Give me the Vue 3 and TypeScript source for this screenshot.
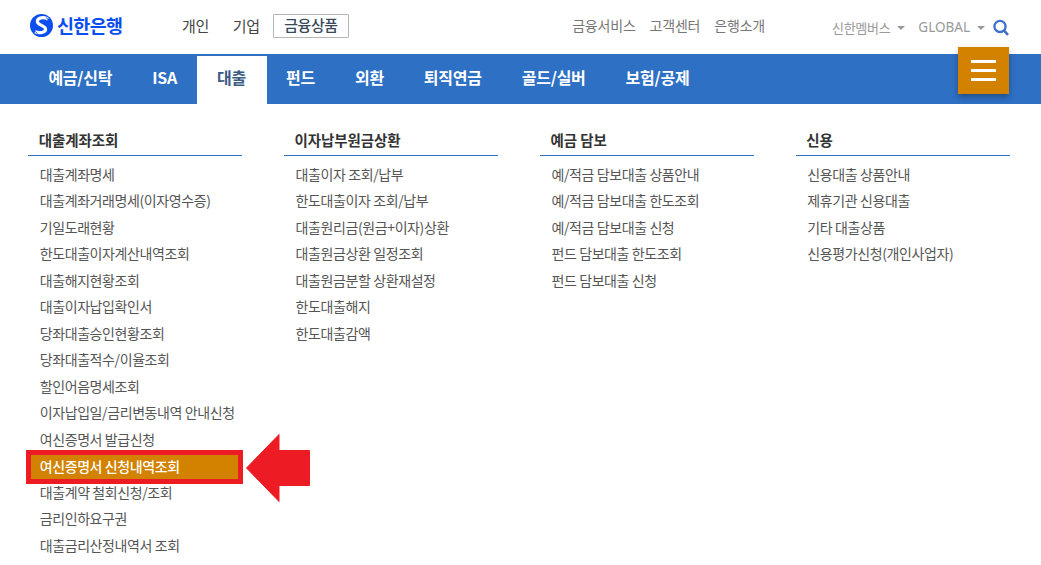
<script setup lang="ts">
const columns: { title: string; items: string[] }[] = [
  { title: '대출계좌조회', items: ['대출계좌명세', '대출계좌거래명세(이자영수증)', '기일도래현황', '한도대출이자계산내역조회', '대출해지현황조회', '대출이자납입확인서', '당좌대출승인현황조회', '당좌대출적수/이율조회', '할인어음명세조회', '이자납입일/금리변동내역 안내신청', '여신증명서 발급신청', '여신증명서 신청내역조회', '대출계약 철회신청/조회', '금리인하요구권', '대출금리산정내역서 조회'] },
  { title: '이자납부원금상환', items: ['대출이자 조회/납부', '한도대출이자 조회/납부', '대출원리금(원금+이자)상환', '대출원금상환 일정조회', '대출원금분할 상환재설정', '한도대출해지', '한도대출감액'] },
  { title: '예금 담보', items: ['예/적금 담보대출 상품안내', '예/적금 담보대출 한도조회', '예/적금 담보대출 신청', '펀드 담보대출 한도조회', '펀드 담보대출 신청'] },
  { title: '신용', items: ['신용대출 상품안내', '제휴기관 신용대출', '기타 대출상품', '신용평가신청(개인사업자)'] },
]
const tabs = ['예금/신탁', 'ISA', '대출', '펀드', '외환', '퇴직연금', '골드/실버', '보험/공제']
const highlighted = '여신증명서 신청내역조회'
</script>

<template>
  <div class="page">
    <header class="top">
      <div class="logo">
        <svg width="23" height="23" viewBox="0 0 23 23">
          <circle cx="11.5" cy="11.5" r="11.5" fill="#0b4ef0" />
          <path d="M18 5.2C14 2.4 7 3.6 7.4 7.8 7.8 11.6 15.6 11.2 15.6 15.2 15.6 18.6 9.4 19.6 5 17.8" fill="none" stroke="#fff" stroke-width="3.2" />
          <path d="M3 14.5c1 2 2.4 3.6 4.4 5M15.8 3.6c1.8 1 3.2 2.4 4.2 4.6" fill="none" stroke="#0b4ef0" stroke-width="0.9" />
        </svg>
        <span class="logo-text">신한은행</span>
      </div>
      <nav class="kinds">
        <span>개인</span>
        <span>기업</span>
        <span class="kind-on">금융상품</span>
      </nav>
      <nav class="util">
        <span>금융서비스</span>
        <span>고객센터</span>
        <span>은행소개</span>
      </nav>
      <div class="extra">
        <span class="drop">신한멤버스<i class="caret"></i></span>
        <span class="drop global">GLOBAL<i class="caret"></i></span>
        <svg class="search" width="16" height="17" viewBox="0 0 16 17">
          <circle cx="7" cy="7.4" r="5.6" fill="none" stroke="#3f6fc9" stroke-width="2.3" />
          <path d="M10.8 11.2 15 16" stroke="#3f6fc9" stroke-width="2.6" />
        </svg>
      </div>
    </header>

    <div class="bar">
      <span v-for="t in tabs" :key="t" class="tab" :class="{ active: t === '대출' }">{{ t }}</span>
      <button class="burger" type="button" aria-label="menu"><i></i><i></i><i></i></button>
    </div>

    <main class="menu">
      <section v-for="c in columns" :key="c.title" class="col">
        <h3>{{ c.title }}</h3>
        <ul>
          <li v-for="item in c.items" :key="item" :class="{ hl: item === highlighted }">{{ item }}</li>
        </ul>
      </section>
    </main>

    <svg class="arrow" width="64" height="70" viewBox="0 0 64 70">
      <polygon points="0.5,35 33,1.5 33,17.5 63.5,17.5 63.5,52.5 33,52.5 33,68.5" fill="#ed1c24" stroke="#ed1c24" stroke-width="1" stroke-linejoin="round" />
    </svg>
  </div>
</template>

<style>
html, body { margin: 0; background: #fff; }
</style>

<style scoped>
.page {
  position: relative;
  width: 1041px;
  height: 565px;
  overflow: hidden;
  background: #fff;
  font-family: "Noto Sans CJK KR", "Noto Sans", sans-serif;
}
.top {
  display: flex;
  align-items: center;
  height: 54px;
  padding: 0 32px 4px 30px;
  box-sizing: border-box;
}
.logo { display: flex; align-items: center; gap: 4px; width: 152px; }
.logo-text { font-size: 18.5px; font-weight: 700; color: #0b4ef0; letter-spacing: -0.7px; line-height: 23px; }
.kinds { display: flex; align-items: center; font-size: 15px; color: #444; }
.kinds span { margin-right: 24px; letter-spacing: -0.4px; }
.kinds .kind-on {
  margin-left: -11px;
  margin-right: 0;
  margin-top: 2px;
  padding: 0 10.5px;
  height: 24px;
  line-height: 20px;
  box-sizing: border-box;
  border: 1px solid #b5b5b5;
  border-radius: 1px;
  font-weight: 500;
  color: #3a4a5c;
}
.util { display: flex; gap: 14px; margin-left: auto; font-size: 14px; color: #777; letter-spacing: -0.2px; }
.extra { display: flex; align-items: center; margin-left: 67px; margin-top: 4px; font-size: 13px; color: #999; }
.drop { display: flex; align-items: center; letter-spacing: -0.3px; }
.global { margin-left: 13px; font-family: "Noto Sans", sans-serif; font-size: 13.5px; letter-spacing: 0; }
.caret {
  display: inline-block;
  width: 0;
  height: 0;
  margin-left: 7px;
  margin-top: 1px;
  border-left: 4px solid transparent;
  border-right: 4px solid transparent;
  border-top: 4px solid #999;
}
.search { margin-left: 8px; }
.bar {
  position: relative;
  display: flex;
  align-items: flex-end;
  height: 50px;
  padding-left: 28.4px;
  background: #2e70c4;
}
.tab {
  height: 48px;
  line-height: 43px;
  padding: 0 20px;
  box-sizing: border-box;
  font-size: 16px;
  font-weight: 700;
  letter-spacing: -0.25px;
  color: #fff;
}
.tab.active { padding-right: 21px; margin-right: -1px; background: #fff; color: #3a5a80; }
.burger {
  position: absolute;
  left: 958px;
  top: -7px;
  width: 51px;
  height: 47px;
  padding: 0;
  border: 0;
  background: #d38200;
  box-shadow: 0 3px 6px rgba(0, 0, 0, 0.3);
  display: flex;
  flex-direction: column;
  align-items: center;
  justify-content: center;
  gap: 6px;
}
.burger i { display: block; width: 25px; height: 3px; background: #fff; }
.menu {
  display: grid;
  grid-template-columns: repeat(4, 213.9px);
  column-gap: 42px;
  padding: 24px 0 0 28px;
}
h3 {
  margin: 0;
  padding: 0 0 4px 10.7px;
  height: 28px;
  box-sizing: border-box;
  line-height: 24px;
  font-size: 14.5px;
  font-weight: 700;
  letter-spacing: -0.1px;
  color: #333;
  border-bottom: 1px solid #2e70c4;
}
ul { list-style: none; margin: 4.75px 0 0; padding: 0; }
li {
  height: 26.5px;
  line-height: 26.5px;
  padding-left: 11.7px;
  font-size: 14px;
  letter-spacing: -0.4px;
  color: #555;
  white-space: nowrap;
}
li.hl {
  position: relative;
  z-index: 1;
  margin: -2px -1px -5.5px -2px;
  height: 34px;
  line-height: 22px;
  padding-left: 8.7px;
  box-sizing: border-box;
  border: 5px solid #ed1c24;
  background: #d38200;
  color: #fff;
  font-weight: 500;
}
.arrow { position: absolute; left: 246px; top: 433px; }
</style>
